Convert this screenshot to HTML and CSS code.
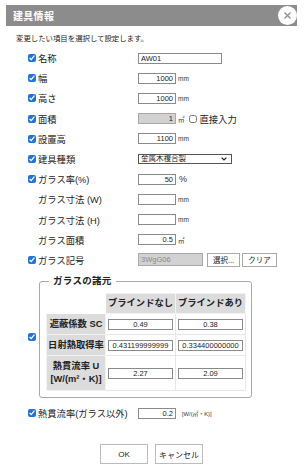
FILE: index.html
```html
<!DOCTYPE html>
<html lang="ja">
<head>
  <meta charset="UTF-8" />
  <meta name="viewport" content="width=device-width, initial-scale=1.0"/>
  <title>建具情報</title>
  <link rel="stylesheet" href="styles.css">
</head>
<body>
  <div class="dialog">
    <div class="titlebar">
      <span class="title">建具情報</span>
      <button class="close" aria-label="閉じる">
        <svg width="9" height="9" viewBox="0 0 9 9"><path d="M1.5 1.5 L7.5 7.5 M7.5 1.5 L1.5 7.5" stroke="#8c8c8c" stroke-width="1.3" fill="none"/></svg>
      </button>
    </div>

    <div class="content">
      <p class="lead">変更したい項目を選択して設定します。</p>

      <div class="form">
        <div class="row">
          <label class="lbl"><input type="checkbox" checked>名称</label>
          <div class="field"><input class="txt txt-name" value="AW01"></div>
        </div>
        <div class="row">
          <label class="lbl"><input type="checkbox" checked>幅</label>
          <div class="field"><input class="txt num" value="1000"><span class="unit">mm</span></div>
        </div>
        <div class="row">
          <label class="lbl"><input type="checkbox" checked>高さ</label>
          <div class="field"><input class="txt num" value="1000"><span class="unit">mm</span></div>
        </div>
        <div class="row">
          <label class="lbl"><input type="checkbox" checked>面積</label>
          <div class="field">
            <input class="txt num readonly" value="1" readonly><span class="unit">㎡</span>
            <label class="direct"><input type="checkbox">直接入力</label>
          </div>
        </div>
        <div class="row">
          <label class="lbl"><input type="checkbox" checked>設置高</label>
          <div class="field"><input class="txt num" value="1100"><span class="unit">mm</span></div>
        </div>
        <div class="row">
          <label class="lbl"><input type="checkbox" checked>建具種類</label>
          <div class="field">
            <div class="select-wrap">
              <select class="sel">
                <option>金属木複合製</option>
              </select>
              <svg class="chev" width="6" height="4" viewBox="0 0 6 4"><path d="M0.6 0.6 L3 3 L5.4 0.6" stroke="#222" stroke-width="1.2" fill="none"/></svg>
            </div>
          </div>
        </div>
        <div class="row">
          <label class="lbl"><input type="checkbox" checked>ガラス率(%)</label>
          <div class="field"><input class="txt num" value="50"><span class="unit unit-big">%</span></div>
        </div>
        <div class="row">
          <span class="lbl indent">ガラス寸法 (W)</span>
          <div class="field"><input class="txt num" value=""><span class="unit">mm</span></div>
        </div>
        <div class="row">
          <span class="lbl indent">ガラス寸法 (H)</span>
          <div class="field"><input class="txt num" value=""><span class="unit">mm</span></div>
        </div>
        <div class="row">
          <span class="lbl indent">ガラス面積</span>
          <div class="field"><input class="txt num" value="0.5"><span class="unit">㎡</span></div>
        </div>
        <div class="row">
          <label class="lbl"><input type="checkbox" checked>ガラス記号</label>
          <div class="field">
            <input class="txt txt-code readonly" value="3WgG06" readonly>
            <button class="btn-small">選択...</button>
            <button class="btn-small">クリア</button>
          </div>
        </div>

        <div class="row row-spec">
          <input type="checkbox" checked>
          <fieldset class="spec">
            <legend>ガラスの諸元</legend>
            <table class="spec-table">
              <colgroup>
                <col class="c-label">
                <col class="c-val">
                <col class="c-val">
              </colgroup>
              <tr class="r-head">
                <th class="blank"></th>
                <th>ブラインドなし</th>
                <th>ブラインドあり</th>
              </tr>
              <tr class="r-val">
                <th>遮蔽係数 SC</th>
                <td><input class="cell" value="0.49"></td>
                <td><input class="cell" value="0.38"></td>
              </tr>
              <tr class="r-val">
                <th>日射熱取得率</th>
                <td><input class="cell" value="0.431199999999"></td>
                <td><input class="cell" value="0.334400000000"></td>
              </tr>
              <tr class="r-tall">
                <th>熱貫流率 U<br>[W/(m²・K)]</th>
                <td><input class="cell" value="2.27"></td>
                <td><input class="cell" value="2.09"></td>
              </tr>
            </table>
          </fieldset>
        </div>

        <div class="row row-after">
          <label class="lbl"><input type="checkbox" checked>熱貫流率(ガラス以外)</label>
          <div class="field"><input class="txt num" value="0.2"><span class="unit unit-tiny">[W/(㎡・K)]</span></div>
        </div>
      </div>

      <div class="actions">
        <button class="btn">OK</button>
        <button class="btn">キャンセル</button>
      </div>
    </div>
  </div>
</body>
</html>
```

FILE: styles.css
```css
* {
  box-sizing: border-box;
}
body {
  margin: 0;
  background: #ffffff;
  font-family: "Liberation Sans", "Noto Sans CJK JP", sans-serif;
  color: #222;
}
.dialog {
  width: 291px;
  margin: 5px 0 0 6px;
}
.titlebar {
  height: 21px;
  background: #8c8c8c;
  display: flex;
  align-items: center;
  justify-content: space-between;
  padding-left: 7px;
}
.title {
  color: #fff;
  font-weight: bold;
  font-size: 10px;
  letter-spacing: 0.3px;
}
.close {
  width: 19px;
  height: 19px;
  border-radius: 50%;
  background: #fff;
  border: none;
  padding: 0;
  display: flex;
  align-items: center;
  justify-content: center;
}
.lead {
  margin: 8px 0 4px 10px;
  font-size: 7.4px;
  line-height: 10px;
}
.form {
  padding-left: 22px;
}
.row {
  display: flex;
  align-items: center;
  height: 20.2px;
}
.lbl {
  width: 110px;
  display: flex;
  align-items: center;
  font-size: 9.3px;
  white-space: nowrap;
}
.lbl.indent {
  padding-left: 10px;
}
input[type="checkbox"] {
  width: 8px;
  height: 8px;
  margin: 0 2px 0 0;
  accent-color: #1f74de;
}
.field {
  display: flex;
  align-items: center;
  gap: 2px;
}
.txt {
  width: 38px;
  height: 11px;
  border: 1px solid #8a8a8a;
  padding: 0 2px;
  font-family: inherit;
  font-size: 7.5px;
  color: #222;
  background: #fff;
  outline: none;
}
.num {
  text-align: right;
}
.txt-name {
  width: 84px;
}
.readonly {
  background: #d2d2d2;
  border-color: #a8a8a8;
}
.txt-code {
  width: 65px;
  height: 13px;
  color: #8a8a8a;
  margin-right: 2px;
}
.unit {
  font-size: 6.5px;
  color: #333;
}
.unit-big {
  font-size: 9px;
  margin-left: 1px;
}
.unit-tiny {
  font-size: 5.8px;
  margin-left: 4px;
}
.direct {
  display: flex;
  align-items: center;
  font-size: 9.3px;
  margin-left: 2px;
}
.direct input[type="checkbox"] {
  margin-right: 3px;
}
.select-wrap {
  position: relative;
  display: flex;
}
.sel {
  appearance: none;
  width: 94px;
  height: 10px;
  border: 1px solid #555;
  border-radius: 0;
  padding: 0 0 0 2px;
  font-family: inherit;
  font-size: 7.5px;
  line-height: 8px;
  background: #fff;
  color: #222;
}
.chev {
  position: absolute;
  right: 5px;
  top: 3px;
}
.btn-small {
  height: 14px;
  padding: 0 5px;
  border: 1px solid #a8a8a8;
  background: #fff;
  font-family: inherit;
  font-size: 7.5px;
  color: #222;
  white-space: nowrap;
}
.row-spec {
  height: auto;
  margin-top: 6px;
}
.row-spec > input[type="checkbox"] {
  margin-right: 3px;
}
.spec {
  width: 211px;
  margin: 0;
  padding: 7px 5px 6px 6px;
  border: 1px solid #a8a8a8;
  border-radius: 3px;
}
.spec legend {
  margin-left: 3px;
  padding: 0 4px;
  font-size: 9.5px;
  line-height: 10px;
  font-weight: bold;
  letter-spacing: 0.3px;
}
.spec-table {
  border-collapse: collapse;
  table-layout: fixed;
  width: 199px;
}
.c-label {
  width: 59px;
}
.c-val {
  width: 70px;
}
.spec-table th,
.spec-table td {
  border: 1px solid #e6e6e6;
  padding: 0;
  text-align: center;
}
.spec-table th {
  background: #dcdcdc;
  font-size: 9.3px;
  font-weight: bold;
  line-height: 13px;
  white-space: nowrap;
  border-color: #f2f2f2;
}
.spec-table th.blank {
  background: #fff;
  border-color: #fff;
}
.r-head {
  height: 20px;
}
.r-val {
  height: 21px;
}
.r-tall {
  height: 35px;
}
.cell {
  display: block;
  margin: 0 auto;
  width: 65px;
  height: 11px;
  border: 1px solid #8a8a8a;
  padding: 0 2px;
  font-family: inherit;
  font-size: 7.5px;
  text-align: center;
  color: #222;
  outline: none;
}
.row-after {
  margin-top: 5px;
}
.actions {
  display: flex;
  justify-content: center;
  gap: 7px;
  margin-top: 21px;
}
.btn {
  width: 48px;
  height: 20px;
  padding: 0;
  border: 1px solid #bbb;
  background: #fff;
  font-family: inherit;
  font-size: 8px;
  color: #222;
  white-space: nowrap;
}
```
